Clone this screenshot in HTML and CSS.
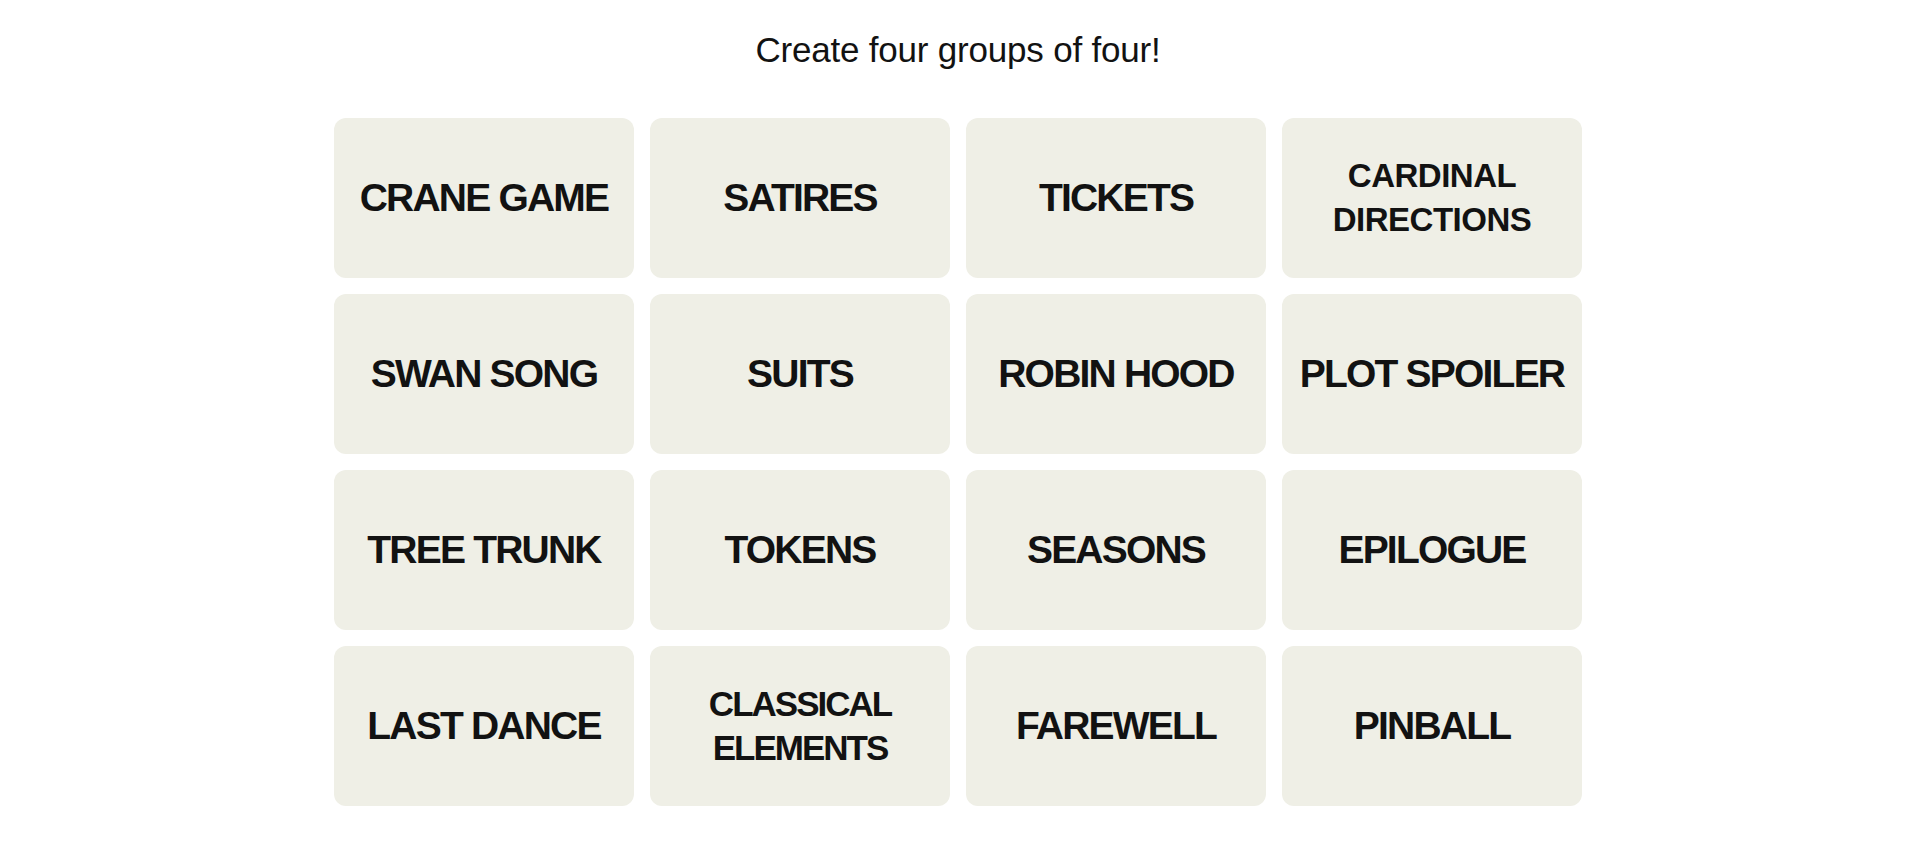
FILE: index.html
```html
<!DOCTYPE html>
<html lang="en">
<head>
    <meta charset="UTF-8">
    <meta name="viewport" content="width=device-width, initial-scale=1.0">
    <title>Connections</title>
    <link rel="stylesheet" href="styles.css">
</head>
<body>

<div class="game">
    <!-- Consigne -->
    <h1 class="prompt">Create four groups of four!</h1>

    <!-- Grille de 16 mots -->
    <div class="board">
        <div class="tile">CRANE GAME</div>
        <div class="tile">SATIRES</div>
        <div class="tile">TICKETS</div>
        <div class="tile long">CARDINAL DIRECTIONS</div>

        <div class="tile">SWAN SONG</div>
        <div class="tile">SUITS</div>
        <div class="tile">ROBIN HOOD</div>
        <div class="tile">PLOT SPOILER</div>

        <div class="tile">TREE TRUNK</div>
        <div class="tile">TOKENS</div>
        <div class="tile">SEASONS</div>
        <div class="tile">EPILOGUE</div>

        <div class="tile">LAST DANCE</div>
        <div class="tile medium">CLASSICAL ELEMENTS</div>
        <div class="tile">FAREWELL</div>
        <div class="tile">PINBALL</div>
    </div>
</div>

</body>
</html>
```

FILE: styles.css
```css
body {
    font-family: "Liberation Sans", Arial, sans-serif;
    background-color: #ffffff;
    color: #121212;
    margin: 0;
}
.game {
    padding-left: 8px;
    display: flex;
    flex-direction: column;
    align-items: center;
}
.prompt {
    font-size: 35px;
    font-weight: normal;
    line-height: 40px;
    margin: 30px 0 48px 0;
    letter-spacing: -0.2px;
}
.board {
    display: grid;
    grid-template-columns: repeat(4, 300px);
    grid-auto-rows: 160px;
    gap: 16px;
}
.tile {
    background-color: #efefe6;
    border-radius: 12px;
    display: flex;
    align-items: center;
    justify-content: center;
    text-align: center;
    font-size: 39px;
    font-weight: bold;
    letter-spacing: -1.8px;
    line-height: 44px;
    padding: 0 16px;
}
.tile.medium {
    font-size: 35px;
    letter-spacing: -2px;
    padding: 0 50px;
}
.tile.long {
    font-size: 33px;
    letter-spacing: -0.5px;
    padding: 0 40px;
}
```
